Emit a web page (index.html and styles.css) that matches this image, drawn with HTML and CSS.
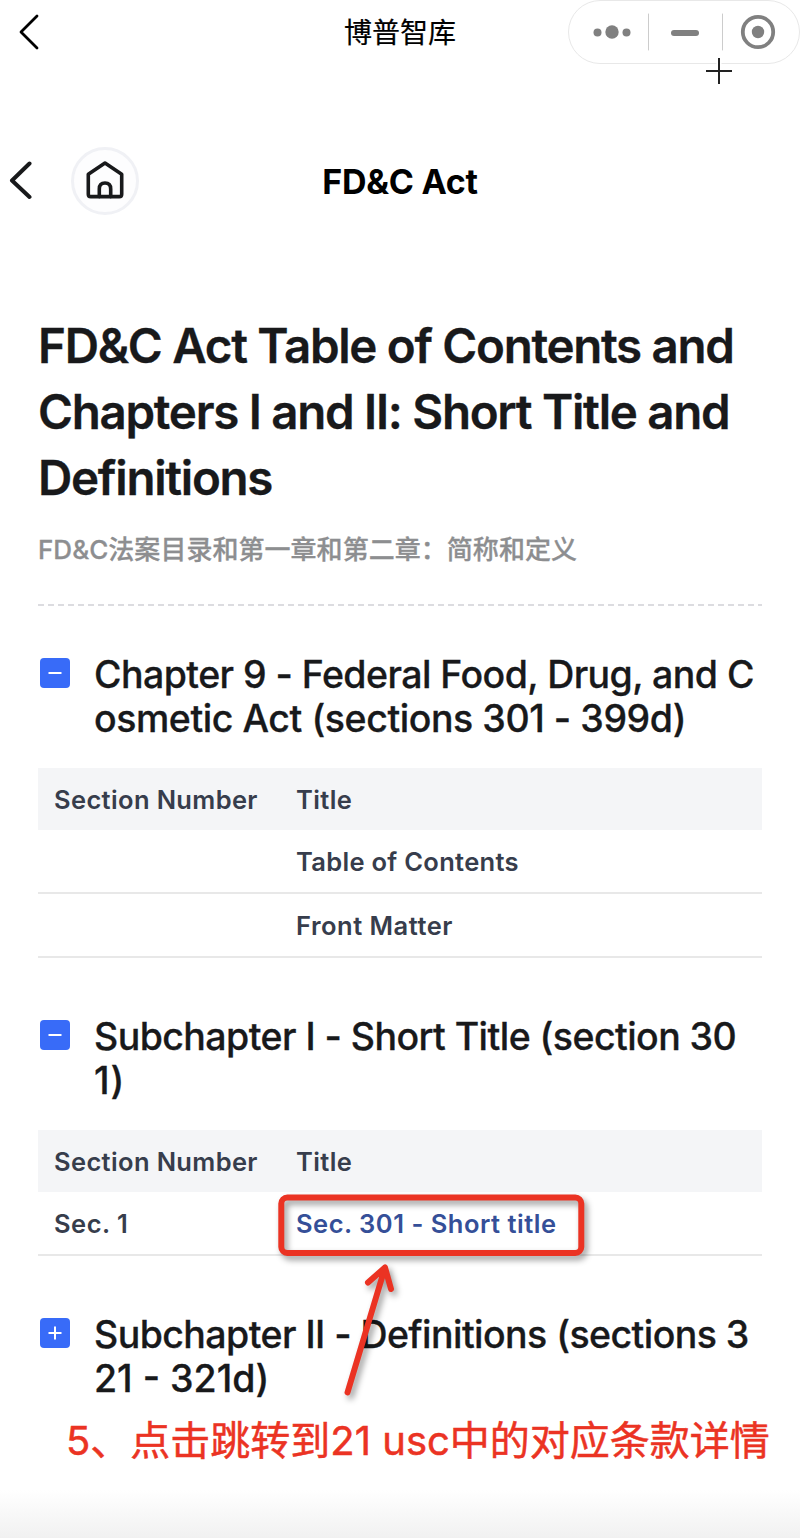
FILE: index.html
```html
<!DOCTYPE html>
<html lang="zh-CN">
<head>
<meta charset="utf-8">
<title>博普智库</title>
<link rel="stylesheet" href="styles.css">
</head>
<body>
<div class="page">
  <header class="topbar">
    <svg class="back" width="22" height="36" viewBox="0 0 22 36"><path d="M19 2 3 18 19 34"/></svg>
    <span class="app-name">博普智库</span>
    <div class="capsule">
      <svg width="232" height="64" viewBox="0 0 232 64">
        <rect class="outline" x=".5" y=".5" width="231" height="63" rx="31.5"/>
        <g class="ink"><circle cx="29.5" cy="32.5" r="4"/><circle cx="44" cy="32" r="6.7"/><circle cx="58.500" cy="32.500" r="4"/><rect x="103" y="30" width="28" height="6" rx="3"/><circle cx="190" cy="32" r="6.200"/></g>
        <path class="divider" d="M80.500 14v36M154.500 14v36"/>
        <circle class="ring" cx="190" cy="32" r="15.200"/>
      </svg>
      <svg class="cross" width="32" height="32" viewBox="0 0 32 32"><path class="halo" d="M16 1v30M1 16h30"/><path d="M16 3v26M3 16h26"/></svg>
    </div>
  </header>
  <nav class="navbar">
    <svg class="nav-back" width="24" height="40" viewBox="0 0 24 40"><path d="M21.500 2.500 4 19.500 21.500 36"/></svg>
    <div class="home">
      <svg width="40" height="40" viewBox="0 0 40 40"><path d="M20 3 36.700 14.200V34.200Q36.700 36.600 34.300 36.600H5.700Q3.300 36.600 3.300 34.200V14.200Z"/><path d="M14.300 36.600V29Q14.300 23 20 23T25.700 29V36.600"/></svg>
    </div>
    <span class="nav-title">FD&amp;C Act</span>
  </nav>
  <main class="content">
    <h1 class="title"><span>FD&amp;C Act Table of Contents and</span> <span>Chapters I and II: Short Title and</span> <span>Definitions</span></h1>
    <p class="subtitle">FD&amp;C法案目录和第一章和第二章：简称和定义</p>
    <svg class="rule" width="724" height="2"><path d="M0 1H724"/></svg>

    <section class="group">
      <div class="heading">
        <svg class="toggle" width="30" height="30" viewBox="0 0 30 30"><rect width="30" height="30" rx="4"/><path d="M8.500 15h13"/></svg>
        <h2><span class="snug">Chapter 9 - Federal Food, Drug, and C</span><span>osmetic Act (sections 301 - 399d)</span></h2>
      </div>
      <div class="table">
        <div class="row head"><span>Section Number</span><span>Title</span></div>
        <div class="row"><span></span><span class="toc">Table of Contents</span></div>
        <div class="row"><span></span><span class="wide">Front Matter</span></div>
      </div>
    </section>

    <section class="group">
      <div class="heading">
        <svg class="toggle" width="30" height="30" viewBox="0 0 30 30"><rect width="30" height="30" rx="4"/><path d="M8.500 15h13"/></svg>
        <h2><span class="snug">Subchapter I - Short Title (section 30</span><span class="loose">1)</span></h2>
      </div>
      <div class="table">
        <div class="row head"><span>Section Number</span><span>Title</span></div>
        <div class="row"><span class="wide">Sec. 1</span><span class="link wide">Sec. 301 - Short title</span></div>
      </div>
    </section>

    <section class="group">
      <div class="heading">
        <svg class="toggle" width="30" height="30" viewBox="0 0 30 30"><rect width="30" height="30" rx="4"/><path d="M8.500 15h13M15 8.500v13"/></svg>
        <h2><span class="snug">Subchapter II - Definitions (sections 3</span><span class="normal">21 - 321d)</span></h2>
      </div>
    </section>
  </main>
  <p class="note">5、点击跳转到21 usc中的对应条款详情</p>
  <svg class="marks" width="340" height="230" viewBox="260 1180 340 230">
    <rect x="281.300" y="1197.500" width="300" height="55.500" rx="6"/>
    <path d="M347.500 1392.500 385 1267.500M368 1282.500 385 1267.500 391 1289"/>
  </svg>
  <div class="fade"></div>
</div>
</body>
</html>
```
FILE: styles.css
```css
* { box-sizing: border-box; }
body { margin: 0; background: #fff; font-family: Inter, "Noto Sans CJK SC", sans-serif; color: #18191b; }
h1, h2, p { margin: 0; }
svg { display: block; flex: none; fill: none; stroke-linecap: round; stroke-linejoin: round; }
.page { position: relative; width: 800px; height: 1538px; overflow: hidden; display: flex; flex-direction: column; }

.topbar { height: 64px; display: grid; grid-template-columns: 232px 1fr 232px; align-items: center; }
.back { margin-left: 18px; stroke: #000; stroke-width: 2.8; }
.app-name { padding-top: 2px; text-align: center; font-size: 28px; line-height: 40px; color: #000; -webkit-text-stroke: .2px; }
.capsule { position: relative; }
.outline { stroke: #e8e8e8; }
.ink { fill: #808080; }
.divider { stroke: #ccc; }
.ring { stroke: #808080; stroke-width: 3.800; }
.cross { position: absolute; left: 135px; top: 55px; stroke: #222; stroke-width: 2; stroke-linecap: butt; }
.halo { stroke: #fff; stroke-width: 5; }

.navbar { height: 66px; margin-top: 83px; display: grid; grid-template-columns: 71px 66px 1fr 137px; align-items: center; }
.nav-back { margin-left: 8px; stroke: #18191b; stroke-width: 4; }
.home { width: 68px; height: 68px; border: 3px solid #f0f1f5; border-radius: 50%; background: #fdfdfe; display: flex; align-items: center; justify-content: center; }
.home svg { margin-top: -2px; stroke: #18191b; stroke-width: 3.600; }
.nav-title { padding-top: 1px; text-align: center; font-size: 34px; font-weight: 700; color: #000; letter-spacing: -.25px; }

.content { padding: 100px 38px 0; }
.title { font-size: 47.500px; line-height: 66px; font-weight: 600; letter-spacing: -1.29px; -webkit-text-stroke: .3px; }
.title span, h2 span { display: block; white-space: nowrap; }
.subtitle { margin-top: 21px; font-size: 26px; line-height: 36px; font-weight: 500; letter-spacing: .04px; color: #8d8e90; white-space: nowrap; -webkit-text-stroke: .3px; }
.rule { margin-top: 36px; stroke: #dcdce0; stroke-width: 2; stroke-dasharray: 6 4; stroke-linecap: butt; }

.group { margin-top: 57px; }
.rule + .group { margin-top: 47px; }
.heading { display: flex; gap: 24px; padding-left: 2px; }
.toggle { margin-top: 5px; stroke: #fff; stroke-width: 2; stroke-linecap: butt; }
.toggle rect { fill: #386bf8; stroke: none; }
h2 { font-size: 37.500px; line-height: 44px; font-weight: 500; letter-spacing: -.44px; -webkit-text-stroke: .3px; }
.snug { letter-spacing: -.56px; }
.loose { letter-spacing: .6px; }
.normal { letter-spacing: 0; }
.table { margin-top: 27px; font-size: 25.500px; font-weight: 600; color: #373d4c; letter-spacing: .36px; }
.row { display: grid; grid-template-columns: 242px 1fr; height: 64px; padding: 1px 16px 0; line-height: 62px; border-bottom: 2px solid #e8e8e8; white-space: nowrap; }
.head { height: 62px; border: 0; background: #f4f5f7; }
.toc { letter-spacing: .3px; }
.wide { letter-spacing: .51px; }
.link { color: #354f98; }

.note { margin: 13px 0 0 66px; font-size: 40px; line-height: 54px; color: #eb3323; white-space: nowrap; -webkit-text-stroke: .5px; }
.marks { position: absolute; left: 260px; top: 1180px; stroke: #eb3323; stroke-width: 6; filter: drop-shadow(3px 4px 3px rgba(0,0,0,.4)); }
.fade { margin-top: auto; height: 48px; background: linear-gradient(#fff, #f1f1f1); }
```
